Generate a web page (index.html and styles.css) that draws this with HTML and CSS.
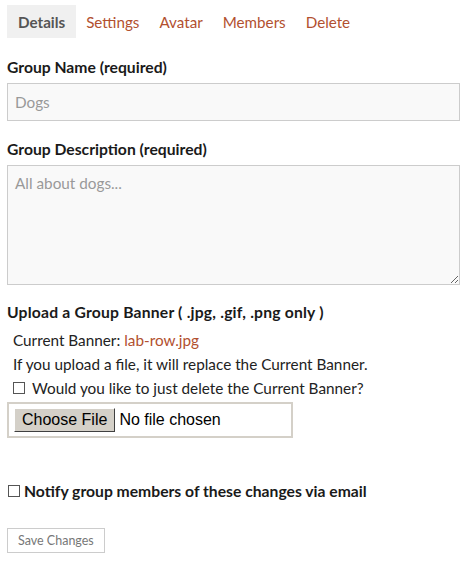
FILE: index.html
```html
<!DOCTYPE html>
<html lang="en">
<head>
    <meta charset="UTF-8">
    <title>Group Details</title>
    <link rel="stylesheet" href="styles.css">
</head>
<body>
<div class="page">
    <ul class="tabs">
        <li class="tab active">Details</li>
        <li class="tab"><a href="#">Settings</a></li>
        <li class="tab"><a href="#">Avatar</a></li>
        <li class="tab"><a href="#">Members</a></li>
        <li class="tab"><a href="#">Delete</a></li>
    </ul>

    <form class="group-form">
        <label class="field-label" for="groupName">Group Name (required)</label>
        <input class="text-input" type="text" id="groupName" placeholder="Dogs">

        <label class="field-label" for="groupDesc">Group Description (required)</label>
        <textarea class="text-area" id="groupDesc" placeholder="All about dogs..."></textarea>

        <div class="field-label banner-label">Upload a Group Banner ( .jpg, .gif, .png only )</div>
        <div class="banner-info">
            <p>Current Banner: <a href="#">lab-row.jpg</a></p>
            <p>If you upload a file, it will replace the Current Banner.</p>
            <p class="check-line"><span class="box"></span>Would you like to just delete the Current Banner?</p>
        </div>
        <div class="file-box">
            <span class="file-btn">Choose File</span>
            <span class="file-name">No file chosen</span>
        </div>

        <p class="notify"><span class="box"></span>Notify group members of these changes via email</p>

        <button class="save-btn" type="button">Save Changes</button>
    </form>
</div>
</body>
</html>
```

FILE: styles.css
```css
* {
    margin: 0;
    padding: 0;
    box-sizing: border-box;
}
body {
    background: #ffffff;
    color: #222222;
    font-family: 'Lato', sans-serif;
    font-size: 15.3px;
}
.page {
    padding: 5px 6px 0 7px;
}
.tabs {
    list-style: none;
    display: flex;
    height: 33px;
}
.tab {
    display: flex;
    align-items: center;
    padding: 0 10px;
    font-size: 15.2px;
}
.tab a {
    color: #b2502f;
    text-decoration: none;
}
.tab.active {
    background: #f0f0f0;
    color: #555555;
    font-weight: bold;
    padding: 0 11px;
}
.group-form {
    display: flex;
    flex-direction: column;
    align-items: flex-start;
}
.field-label {
    font-weight: bold;
    font-size: 15.7px;
    color: #1a1a1a;
    margin-top: 19px;
    line-height: 20px;
    margin-bottom: 6px;
}
.text-input,
.text-area {
    width: 100%;
    border: 1px solid #cccccc;
    background: #f9f9f9;
    font-family: inherit;
    font-size: 15.3px;
    padding: 0 7px;
}
.text-input {
    height: 38px;
}
.text-area {
    height: 120px;
    padding-top: 8px;
    resize: vertical;
}
.text-input::placeholder,
.text-area::placeholder {
    color: #999999;
}
.text-input + .field-label {
    margin-top: 18px;
}
.banner-label {
    margin-top: 17px;
    letter-spacing: 0.2px;
}
.banner-info {
    padding-left: 6px;
    color: #222222;
}
.banner-info p {
    line-height: 24px;
}
.banner-info a {
    color: #b2502f;
    text-decoration: none;
}
.check-line {
    display: flex;
    align-items: center;
}
.box {
    display: inline-block;
    width: 12px;
    height: 12px;
    border: 1px solid #555555;
    background: #ffffff;
    margin-right: 7px;
}
.file-box {
    margin-top: 2px;
    width: 286px;
    height: 36px;
    border: 2px solid #d4d0c8;
    display: flex;
    align-items: center;
    padding-left: 5px;
    font-family: 'Liberation Sans', Arial, sans-serif;
    font-size: 16px;
}
.file-btn {
    background: #d4d0c8;
    border: 1px solid;
    border-color: #ffffff #404040 #404040 #ffffff;
    padding: 2px 7px;
    color: #000000;
    margin-right: 4px;
}
.file-name {
    color: #000000;
}
.notify {
    margin-top: 43px;
    line-height: 20px;
    display: flex;
    align-items: center;
    font-weight: bold;
    font-size: 15.7px;
    color: #1a1a1a;
}
.notify .box {
    margin-right: 4px;
    margin-left: 1px;
}
.save-btn {
    margin-top: 27px;
    background: #ffffff;
    border: 1px solid #cccccc;
    color: #777777;
    font-family: inherit;
    font-size: 12.5px;
    height: 25px;
    padding: 0 10px;
}
```
